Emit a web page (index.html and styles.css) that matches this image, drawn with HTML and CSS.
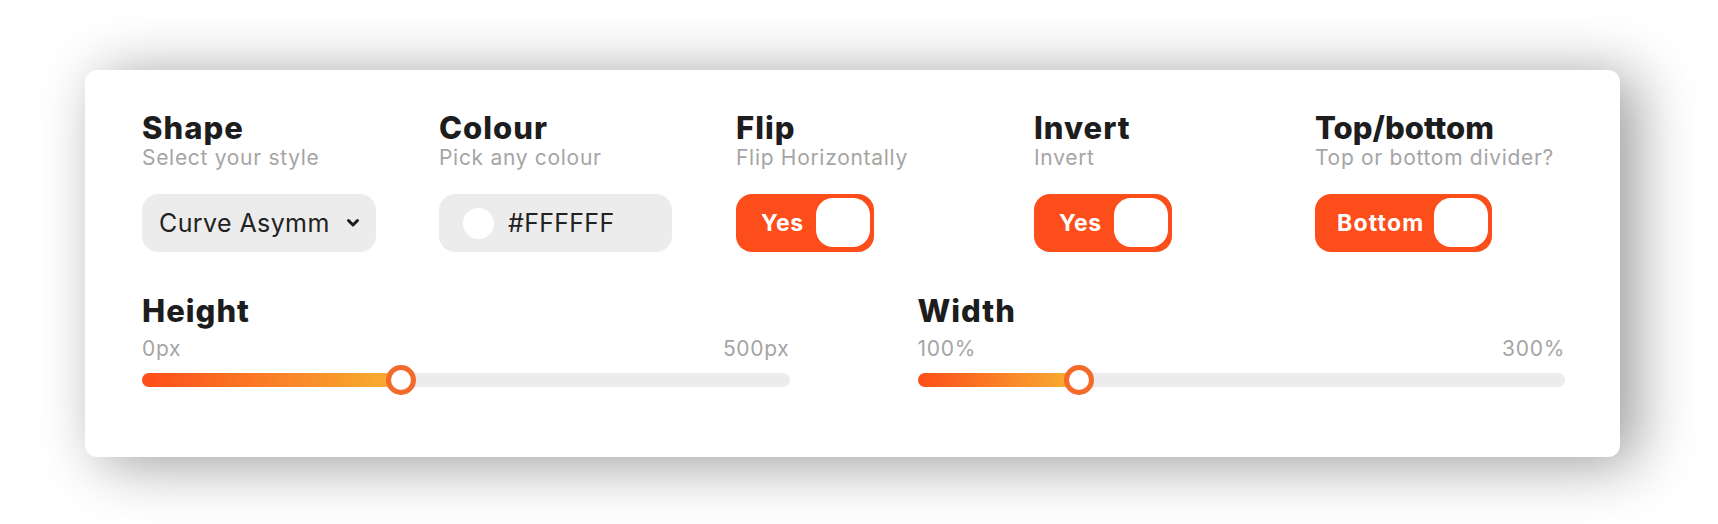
FILE: index.html
```html
<!DOCTYPE html>
<html>
<head>
    <title>Divider Settings</title>
    <link rel="stylesheet" href="styles.css">
</head>
<body>
    <div class="panel">
        <div class="options">
            <div class="option">
                <h3>Shape</h3>
                <p class="hint">Select your style</p>
                <div class="select">
                    <span class="select-value">Curve Asymmetrical</span>
                    <svg class="chevron" width="14" height="14" viewBox="0 0 14 14">
                        <path d="M2.5 4.5 L7 9 L11.5 4.5" fill="none" stroke="#1d1d1d" stroke-width="3" stroke-linecap="round" stroke-linejoin="round"/>
                    </svg>
                </div>
            </div>
            <div class="option">
                <h3>Colour</h3>
                <p class="hint">Pick any colour</p>
                <div class="colour-input">
                    <span class="swatch"></span>
                    <span class="colour-value">#FFFFFF</span>
                </div>
            </div>
            <div class="option">
                <h3>Flip</h3>
                <p class="hint">Flip Horizontally</p>
                <div class="toggle">
                    <span class="toggle-label">Yes</span>
                    <span class="knob"></span>
                </div>
            </div>
            <div class="option">
                <h3>Invert</h3>
                <p class="hint">Invert</p>
                <div class="toggle">
                    <span class="toggle-label">Yes</span>
                    <span class="knob"></span>
                </div>
            </div>
            <div class="option">
                <h3 class="tight">Top/bottom</h3>
                <p class="hint">Top or bottom divider?</p>
                <div class="toggle">
                    <span class="toggle-label wide">Bottom</span>
                    <span class="knob"></span>
                </div>
            </div>
        </div>

        <div class="sliders">
            <div class="slider">
                <h3>Height</h3>
                <div class="range-labels"><span>0px</span><span>500px</span></div>
                <div class="track">
                    <div class="fill" style="width: 40%;"><span class="thumb"></span></div>
                </div>
            </div>
            <div class="slider">
                <h3>Width</h3>
                <div class="range-labels"><span>100%</span><span>300%</span></div>
                <div class="track">
                    <div class="fill" style="width: 25%;"><span class="thumb"></span></div>
                </div>
            </div>
        </div>
    </div>
</body>
</html>
```

FILE: styles.css
```css
body {
    margin: 0;
    padding: 70px 0 80px 85px;
    background-color: #ffffff;
    font-family: Inter, "Noto Sans", sans-serif;
    color: #1d1d1d;
}
.panel {
    width: 1423px;
    padding: 40px 55px 70px 57px;
    background-color: #fff;
    border-radius: 12px;
    box-shadow: 16px 6px 60px rgba(0, 0, 0, 0.4);
}
h3 {
    margin: 0;
    font-size: 31px;
    line-height: 36px;
    font-weight: 800;
    letter-spacing: 1px;
}
h3.tight {
    letter-spacing: 0;
}
.hint {
    margin: 0;
    font-size: 21px;
    line-height: 24px;
    letter-spacing: 0.7px;
    color: #a5a5a5;
    white-space: nowrap;
}
.options {
    display: grid;
    grid-template-columns: 235px 235px 236px 219px 1fr;
    column-gap: 62px;
}
.select,
.colour-input,
.toggle {
    margin-top: 24px;
    height: 58px;
    border-radius: 16px;
    box-sizing: border-box;
    display: flex;
    align-items: center;
}
.select {
    width: 234px;
    padding: 0 15px 0 17px;
    background-color: #ececec;
    gap: 17px;
}
.select-value {
    width: 170px;
    overflow: hidden;
    white-space: nowrap;
    font-size: 25px;
    letter-spacing: 0.4px;
    color: #222;
}
.colour-input {
    width: 233px;
    padding-left: 24px;
    background-color: #ececec;
    gap: 14px;
}
.swatch {
    width: 31px;
    height: 31px;
    border-radius: 50%;
    background-color: #fff;
}
.colour-value {
    font-size: 25px;
    letter-spacing: 0.3px;
    color: #222;
}
.toggle {
    align-self: start;
    width: max-content;
    padding: 4px 4px 5px 25px;
    background-color: #fd4d1b;
    gap: 12px;
}
.toggle-label {
    font-size: 23px;
    font-weight: 700;
    letter-spacing: 0.6px;
    color: #fff;
}
.toggle-label.wide {
    margin-left: -3px;
    margin-right: -2px;
    letter-spacing: 1.2px;
}
.knob {
    width: 54px;
    height: 49px;
    border-radius: 17px;
    background-color: #fff;
}
.sliders {
    margin-top: 41px;
    display: grid;
    grid-template-columns: 1fr 1fr;
    column-gap: 128px;
}
.range-labels {
    margin-top: 8px;
    display: flex;
    justify-content: space-between;
    font-size: 21px;
    line-height: 24px;
    letter-spacing: 0.7px;
    color: #a5a5a5;
}
.track {
    margin-top: 12px;
    height: 14px;
    border-radius: 7px;
    background-color: #ececec;
}
.fill {
    position: relative;
    height: 100%;
    border-radius: 7px 0 0 7px;
    background: linear-gradient(to right, #fd4d1b, #f7b131);
}
.thumb {
    position: absolute;
    right: -15px;
    top: -8px;
    width: 20px;
    height: 20px;
    border: 5px solid #f46a2a;
    border-radius: 50%;
    background-color: #fff;
}
```
